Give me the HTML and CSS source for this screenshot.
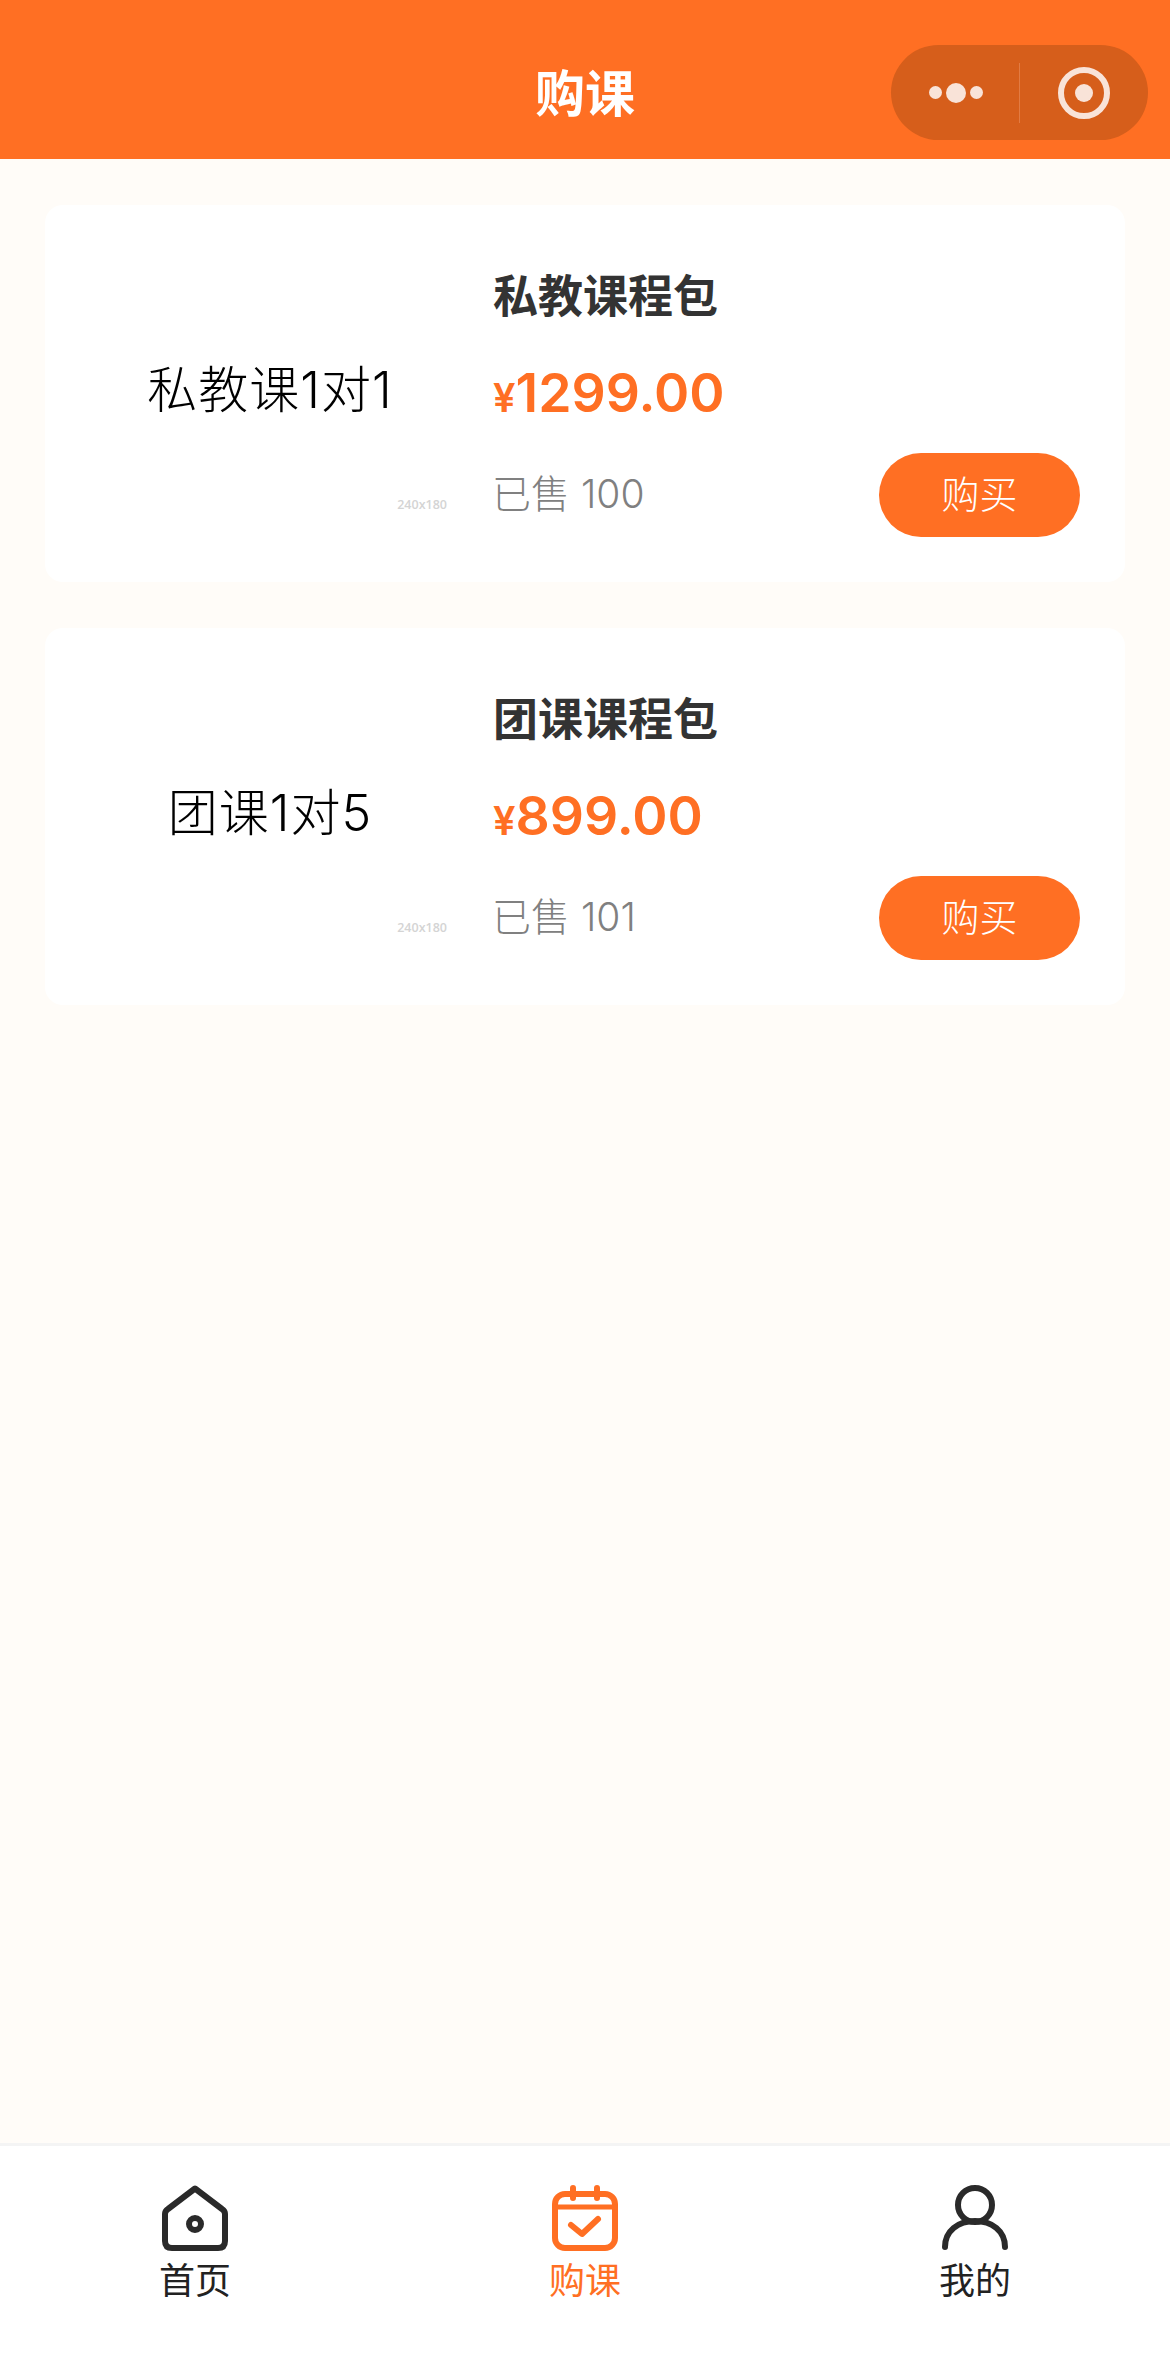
FILE: index.html
```html
<!DOCTYPE html>
<html lang="zh-CN">
<head>
    <meta charset="UTF-8">
    <title>购课</title>
    <link rel="stylesheet" href="styles.css">
</head>
<body>
<div class="page">
    <!-- 顶部导航 -->
    <header class="nav">
        <h1 class="nav-title">购课</h1>
        <div class="capsule">
            <div class="capsule-more">
                <i class="dot"></i><i class="dot dot-big"></i><i class="dot"></i>
            </div>
            <div class="capsule-line"></div>
            <div class="capsule-close"><i class="capsule-ring"></i></div>
        </div>
    </header>

    <!-- 课程列表 -->
    <main class="list">
        <div class="card">
            <div class="cover">
                <span class="cover-text">私教课1对1</span>
                <span class="cover-size">240x180</span>
            </div>
            <div class="info">
                <div class="info-name">私教课程包</div>
                <div class="info-price"><span class="yen">¥</span>1299.00</div>
                <div class="info-foot">
                    <span class="sold">已售 100</span>
                    <a class="buy" href="javascript:;">购买</a>
                </div>
            </div>
        </div>
        <div class="card">
            <div class="cover">
                <span class="cover-text">团课1对5</span>
                <span class="cover-size">240x180</span>
            </div>
            <div class="info">
                <div class="info-name">团课课程包</div>
                <div class="info-price"><span class="yen">¥</span>899.00</div>
                <div class="info-foot">
                    <span class="sold">已售 101</span>
                    <a class="buy" href="javascript:;">购买</a>
                </div>
            </div>
        </div>
    </main>

    <!-- 底部标签栏 -->
    <nav class="tabbar">
        <a class="tab" href="javascript:;">
            <svg class="tab-icon" viewBox="0 0 66 66" fill="none" stroke="#2a2a2a" stroke-width="6" stroke-linejoin="round">
                <path d="M33 3.5 L60 24 Q63 26 63 29 V56 Q63 63 56 63 H10 Q3 63 3 56 V29 Q3 26 6 24 Z"/>
                <circle cx="33" cy="39" r="6"/>
            </svg>
            <span class="tab-name">首页</span>
        </a>
        <a class="tab tab-on" href="javascript:;">
            <svg class="tab-icon" viewBox="0 0 66 66" fill="none" stroke="#ff6f23" stroke-width="6" stroke-linecap="round" stroke-linejoin="round">
                <rect x="3" y="9" width="60" height="54" rx="10"/>
                <path d="M3 22 H63" stroke-width="5"/>
                <path d="M21 3 V13 M45 3 V13"/>
                <path d="M19 40 L30 49 L46 34"/>
            </svg>
            <span class="tab-name">购课</span>
        </a>
        <a class="tab" href="javascript:;">
            <svg class="tab-icon" viewBox="0 0 66 66" fill="none" stroke="#2a2a2a" stroke-width="6" stroke-linecap="round">
                <circle cx="33" cy="20" r="17"/>
                <path d="M3 62 C3 46 16 36 33 36 C50 36 63 46 63 62"/>
            </svg>
            <span class="tab-name">我的</span>
        </a>
    </nav>
</div>
</body>
</html>
```

FILE: styles.css
```css
* {
    margin: 0;
    padding: 0;
    box-sizing: border-box;
}

body {
    font-family: "Noto Sans CJK SC", "Noto Sans", sans-serif;
    background-color: #fffcf8;
}

.page {
    height: 2356px;
    display: flex;
    flex-direction: column;
}

/* 顶部导航 */
.nav {
    position: relative;
    height: 159px;
    padding-top: 42px;
    background-color: #ff6f23;
    text-align: center;
}

.nav-title {
    font-size: 50px;
    font-weight: 700;
    line-height: 96px;
    color: #fff;
}

/* 小程序胶囊 */
.capsule {
    position: absolute;
    top: 45px;
    right: 22px;
    width: 257px;
    height: 95px;
    border-radius: 48px;
    background-color: #d65e1b;
    display: flex;
    align-items: center;
}

.capsule-more {
    width: 128px;
    padding-left: 1px;
    display: flex;
    justify-content: center;
    align-items: center;
    gap: 4px;
}

.dot {
    width: 13px;
    height: 13px;
    border-radius: 50%;
    background-color: #f9e3d8;
}

.dot-big {
    width: 20px;
    height: 20px;
}

.capsule-line {
    width: 1px;
    height: 60px;
    background-color: #e27b43;
}

.capsule-close {
    flex: 1;
    display: flex;
    justify-content: center;
}

.capsule-ring {
    width: 52px;
    height: 52px;
    border: 6px solid #f9e3d8;
    border-radius: 50%;
    display: flex;
    justify-content: center;
    align-items: center;
}

.capsule-ring::after {
    content: "";
    width: 18px;
    height: 18px;
    border-radius: 50%;
    background-color: #f9e3d8;
}

/* 课程列表 */
.list {
    flex: 1;
    padding: 46px 45px 0;
    display: flex;
    flex-direction: column;
    gap: 46px;
}

.card {
    height: 377px;
    padding: 0 45px;
    border-radius: 18px;
    background-color: #fff;
    display: flex;
    align-items: center;
    gap: 43px;
}

.cover {
    position: relative;
    width: 360px;
    height: 270px;
    flex-shrink: 0;
    padding-bottom: 16px;
    display: flex;
    justify-content: center;
    align-items: center;
}

.cover-text {
    font-family: Inter, "Noto Sans CJK SC", sans-serif;
    font-size: 50px;
    font-weight: 300;
    letter-spacing: 1px;
    color: #000;
    white-space: nowrap;
}

.cover-size {
    position: absolute;
    right: 3px;
    bottom: 16px;
    font-family: "Open Sans", sans-serif;
    font-size: 12.5px;
    font-weight: 600;
    color: #d4d4d4;
}

.info {
    flex: 1;
    padding-top: 14px;
}

.info-name {
    font-size: 45px;
    font-weight: 700;
    line-height: 60px;
    color: #333;
}

.info-price {
    margin-top: 34px;
    font-family: Inter, "Noto Sans", sans-serif;
    font-size: 53.5px;
    font-weight: 600;
    line-height: 70px;
    color: #ff6f23;
}

.yen {
    font-size: 40px;
}

.info-foot {
    margin-top: 20px;
    display: flex;
    justify-content: space-between;
    align-items: center;
}

.sold {
    padding-bottom: 8px;
    margin-left: -1px;
    font-family: Inter, "Noto Sans CJK SC", sans-serif;
    font-size: 39px;
    font-weight: 300;
    color: #808080;
}

.buy {
    width: 201px;
    height: 84px;
    border-radius: 42px;
    background-color: #ff6f23;
    color: #fff;
    font-size: 38px;
    font-weight: 300;
    line-height: 78px;
    text-align: center;
    text-decoration: none;
}

/* 底部标签栏 */
.tabbar {
    height: 213px;
    padding-top: 39px;
    border-top: 3px solid #f4f4f4;
    background-color: #fff;
    display: flex;
}

.tab {
    flex: 1;
    display: flex;
    flex-direction: column;
    align-items: center;
    gap: 9px;
    color: #222;
    text-decoration: none;
}

.tab-on {
    color: #ff6f23;
}

.tab-icon {
    width: 66px;
    height: 66px;
}

.tab-name {
    font-size: 36px;
    font-weight: 400;
    line-height: 36px;
}
```
